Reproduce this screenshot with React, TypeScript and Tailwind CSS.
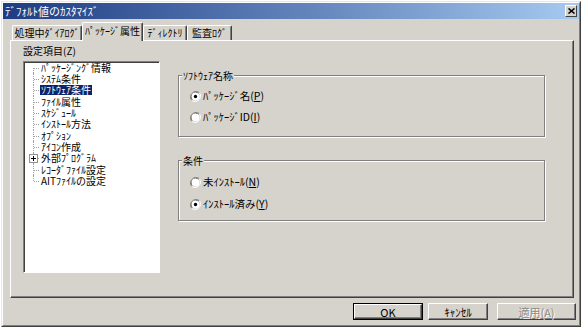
import { ReactNode } from "react";

const font = "font-['Noto_Sans_CJK_JP',sans-serif]";

const treeItems = [
  "ﾊﾟｯｹｰｼﾞﾝｸﾞ情報",
  "ｼｽﾃﾑ条件",
  "ｿﾌﾄｳｪｱ条件",
  "ﾌｧｲﾙ属性",
  "ｽｹｼﾞｭｰﾙ",
  "ｲﾝｽﾄｰﾙ方法",
  "ｵﾌﾟｼｮﾝ",
  "ｱｲｺﾝ作成",
  "外部ﾌﾟﾛｸﾞﾗﾑ",
  "ﾚｺｰﾀﾞﾌｧｲﾙ設定",
  "AITﾌｧｲﾙの設定",
];

function Radio({ checked, children }: { checked?: boolean; children: ReactNode }) {
  return (
    <div className="flex items-center h-[12px]">
      <svg width="11" height="11" viewBox="0 0 12 12" className="shrink-0">
        <path d="M10.2 1.8 A6 6 0 0 0 1.8 10.2" stroke="#808080" strokeWidth="1" fill="none" />
        <path d="M1.8 10.2 A6 6 0 0 0 10.2 1.8" stroke="#ffffff" strokeWidth="1" fill="none" />
        <path d="M9.5 2.5 A5 5 0 0 0 2.5 9.5" stroke="#404040" strokeWidth="1" fill="none" />
        <circle cx="6" cy="6" r="4.3" fill="#ffffff" />
        {checked && <circle cx="6" cy="6" r="1.8" fill="#000000" />}
      </svg>
      <span className="ml-[2px] text-[10.5px] leading-[12px] text-black whitespace-nowrap">{children}</span>
    </div>
  );
}

function GroupBox({ label, height, children }: { label: string; height: string; children: ReactNode }) {
  return (
    <div
      className={`relative w-[367px] ${height} border border-[#808080] shadow-[inset_1px_1px_0_#ffffff,1px_1px_0_#ffffff]`}
    >
      <span className="absolute -top-[6px] left-[3px] px-[1px] bg-[#d5d3cc] text-[10px] leading-[11px] text-black">
        {label}
      </span>
      {children}
    </div>
  );
}

function Tab({ label, selected, width }: { label: string; selected?: boolean; width: string }) {
  return (
    <div
      className={`${width} flex items-start justify-center border-t border-l border-white border-r border-r-[#404040] rounded-t-[2px] shadow-[inset_-1px_0_0_#808080] text-[10px] leading-[12px] text-black whitespace-nowrap ${
        selected ? "h-[19px] -mb-[1px] pt-[2px] relative z-10 bg-[#d5d3cc]" : "h-[15px] pt-[1px]"
      }`}
    >
      {label}
    </div>
  );
}

function Button({ children, width, primary, disabled }: { children: ReactNode; width: string; primary?: boolean; disabled?: boolean }) {
  return (
    <div className={`${width} h-[17px] ${primary ? "border border-black" : ""}`}>
      <div className="w-full h-full flex items-center justify-center border-t border-l border-white border-r border-b border-r-[#404040] border-b-[#404040] shadow-[inset_-1px_-1px_0_#808080] text-[11px] leading-[12px]">
        <span className={disabled ? "text-[#8a8a8a] [text-shadow:1px_1px_0_#ffffff]" : "text-black"}>{children}</span>
      </div>
    </div>
  );
}

export default function App() {
  return (
    <div className={`w-[585px] h-[331px] bg-white overflow-hidden ${font}`}>
      <div className="ml-[1px] mt-[1px] w-[580px] h-[326px] bg-[#d5d3cc] border border-t-[#e8e6e0] border-l-[#e8e6e0] border-r-[#404040] border-b-[#404040]">
        <div className="w-full h-full border border-t-white border-l-white border-r-[#808080] border-b-[#808080] flex flex-col">
          {/* title bar */}
          <div className="h-[16px] flex items-center justify-between bg-gradient-to-r from-[#1e3c82] via-[#5f80b8] to-[#a6caf0] pl-[2px] pr-[2px]">
            <span className="text-white text-[11px] leading-[14px] whitespace-nowrap">ﾃﾞﾌｫﾙﾄ値のｶｽﾀﾏｲｽﾞ</span>
            <div className="w-[12px] h-[12px] bg-[#d5d3cc] border-t border-l border-white border-r border-b border-r-[#404040] border-b-[#404040] flex items-center justify-center">
              <svg width="7" height="6" viewBox="0 0 7 6">
                <path d="M0.5 0.5 L6.5 5.5 M6.5 0.5 L0.5 5.5" stroke="#000" strokeWidth="1.6" />
              </svg>
            </div>
          </div>

          {/* tabs */}
          <div className="h-[21px] flex items-end pl-[9px]">
            <Tab label="処理中ﾀﾞｲｱﾛｸﾞ" width="w-[70px]" />
            <Tab label="ﾊﾟｯｹｰｼﾞ属性" width="w-[61px]" selected />
            <Tab label="ﾃﾞｨﾚｸﾄﾘ" width="w-[44px]" />
            <Tab label="監査ﾛｸﾞ" width="w-[45px]" />
          </div>

          {/* tab panel */}
          <div className="ml-[7px] w-[564px] h-[258px] border-t border-l border-white border-r border-b border-r-[#404040] border-b-[#404040] shadow-[inset_-1px_-1px_0_#808080] flex">
            <div className="ml-[12px] pt-[4px] flex flex-col">
              <div className="text-[10px] leading-[11px] text-black">設定項目(Z)</div>
              <div className="mt-[5px] w-[137px] h-[212px] bg-white border border-t-[#808080] border-l-[#808080] border-r-white border-b-white shadow-[inset_1px_1px_0_#404040] pl-[1px]">
                {treeItems.map((item, i) => (
                  <div key={item} className="flex items-center h-[11.33px]">
                    <div className="relative w-[15px] h-full shrink-0">
                      <div
                        className={`absolute left-[8px] w-0 border-l border-dotted border-[#a0a0a0] ${
                          i === 0 ? "top-1/2 bottom-0" : i === treeItems.length - 1 ? "top-0 h-1/2" : "top-0 bottom-0"
                        }`}
                      />
                      <div className="absolute left-[9px] top-1/2 w-[5px] border-t border-dotted border-[#a0a0a0]" />
                      {item === "外部ﾌﾟﾛｸﾞﾗﾑ" && (
                        <div className="absolute left-[4px] top-[1px] w-[9px] h-[9px] bg-white border border-[#909090] flex items-center justify-center">
                          <svg width="5" height="5" viewBox="0 0 5 5">
                            <path d="M0 2.5 H5 M2.5 0 V5" stroke="#000" strokeWidth="1" />
                          </svg>
                        </div>
                      )}
                    </div>
                    <span
                      className={`text-[10px] leading-[10px] whitespace-nowrap px-[1px] ${
                        item === "ｿﾌﾄｳｪｱ条件" ? "bg-[#0a246a] text-white" : "text-black"
                      }`}
                    >
                      {item}
                    </span>
                  </div>
                ))}
              </div>
            </div>

            <div className="ml-[18px] mt-[34px] flex flex-col gap-[23px]">
              <GroupBox label="ｿﾌﾄｳｪｱ名称" height="h-[62px]">
                <div className="pl-[11px] pt-[14px] flex flex-col gap-[9px]">
                  <Radio checked>
                    ﾊﾟｯｹｰｼﾞ名(<span className="underline">P</span>)
                  </Radio>
                  <Radio>
                    ﾊﾟｯｹｰｼﾞID(<span className="underline">I</span>)
                  </Radio>
                </div>
              </GroupBox>
              <GroupBox label="条件" height="h-[61px]">
                <div className="pl-[11px] pt-[15px] flex flex-col gap-[10px]">
                  <Radio>
                    未ｲﾝｽﾄｰﾙ(<span className="underline">N</span>)
                  </Radio>
                  <Radio checked>
                    ｲﾝｽﾄｰﾙ済み(<span className="underline">Y</span>)
                  </Radio>
                </div>
              </GroupBox>
            </div>
          </div>

          {/* buttons */}
          <div className="mt-[5px] flex justify-end pr-[3px]">
            <Button width="w-[70px]" primary>OK</Button>
            <div className="w-[5px]" />
            <Button width="w-[60px]">ｷｬﾝｾﾙ</Button>
            <div className="w-[9px]" />
            <Button width="w-[79px]" disabled>適用(A)</Button>
          </div>
        </div>
      </div>
    </div>
  );
}
